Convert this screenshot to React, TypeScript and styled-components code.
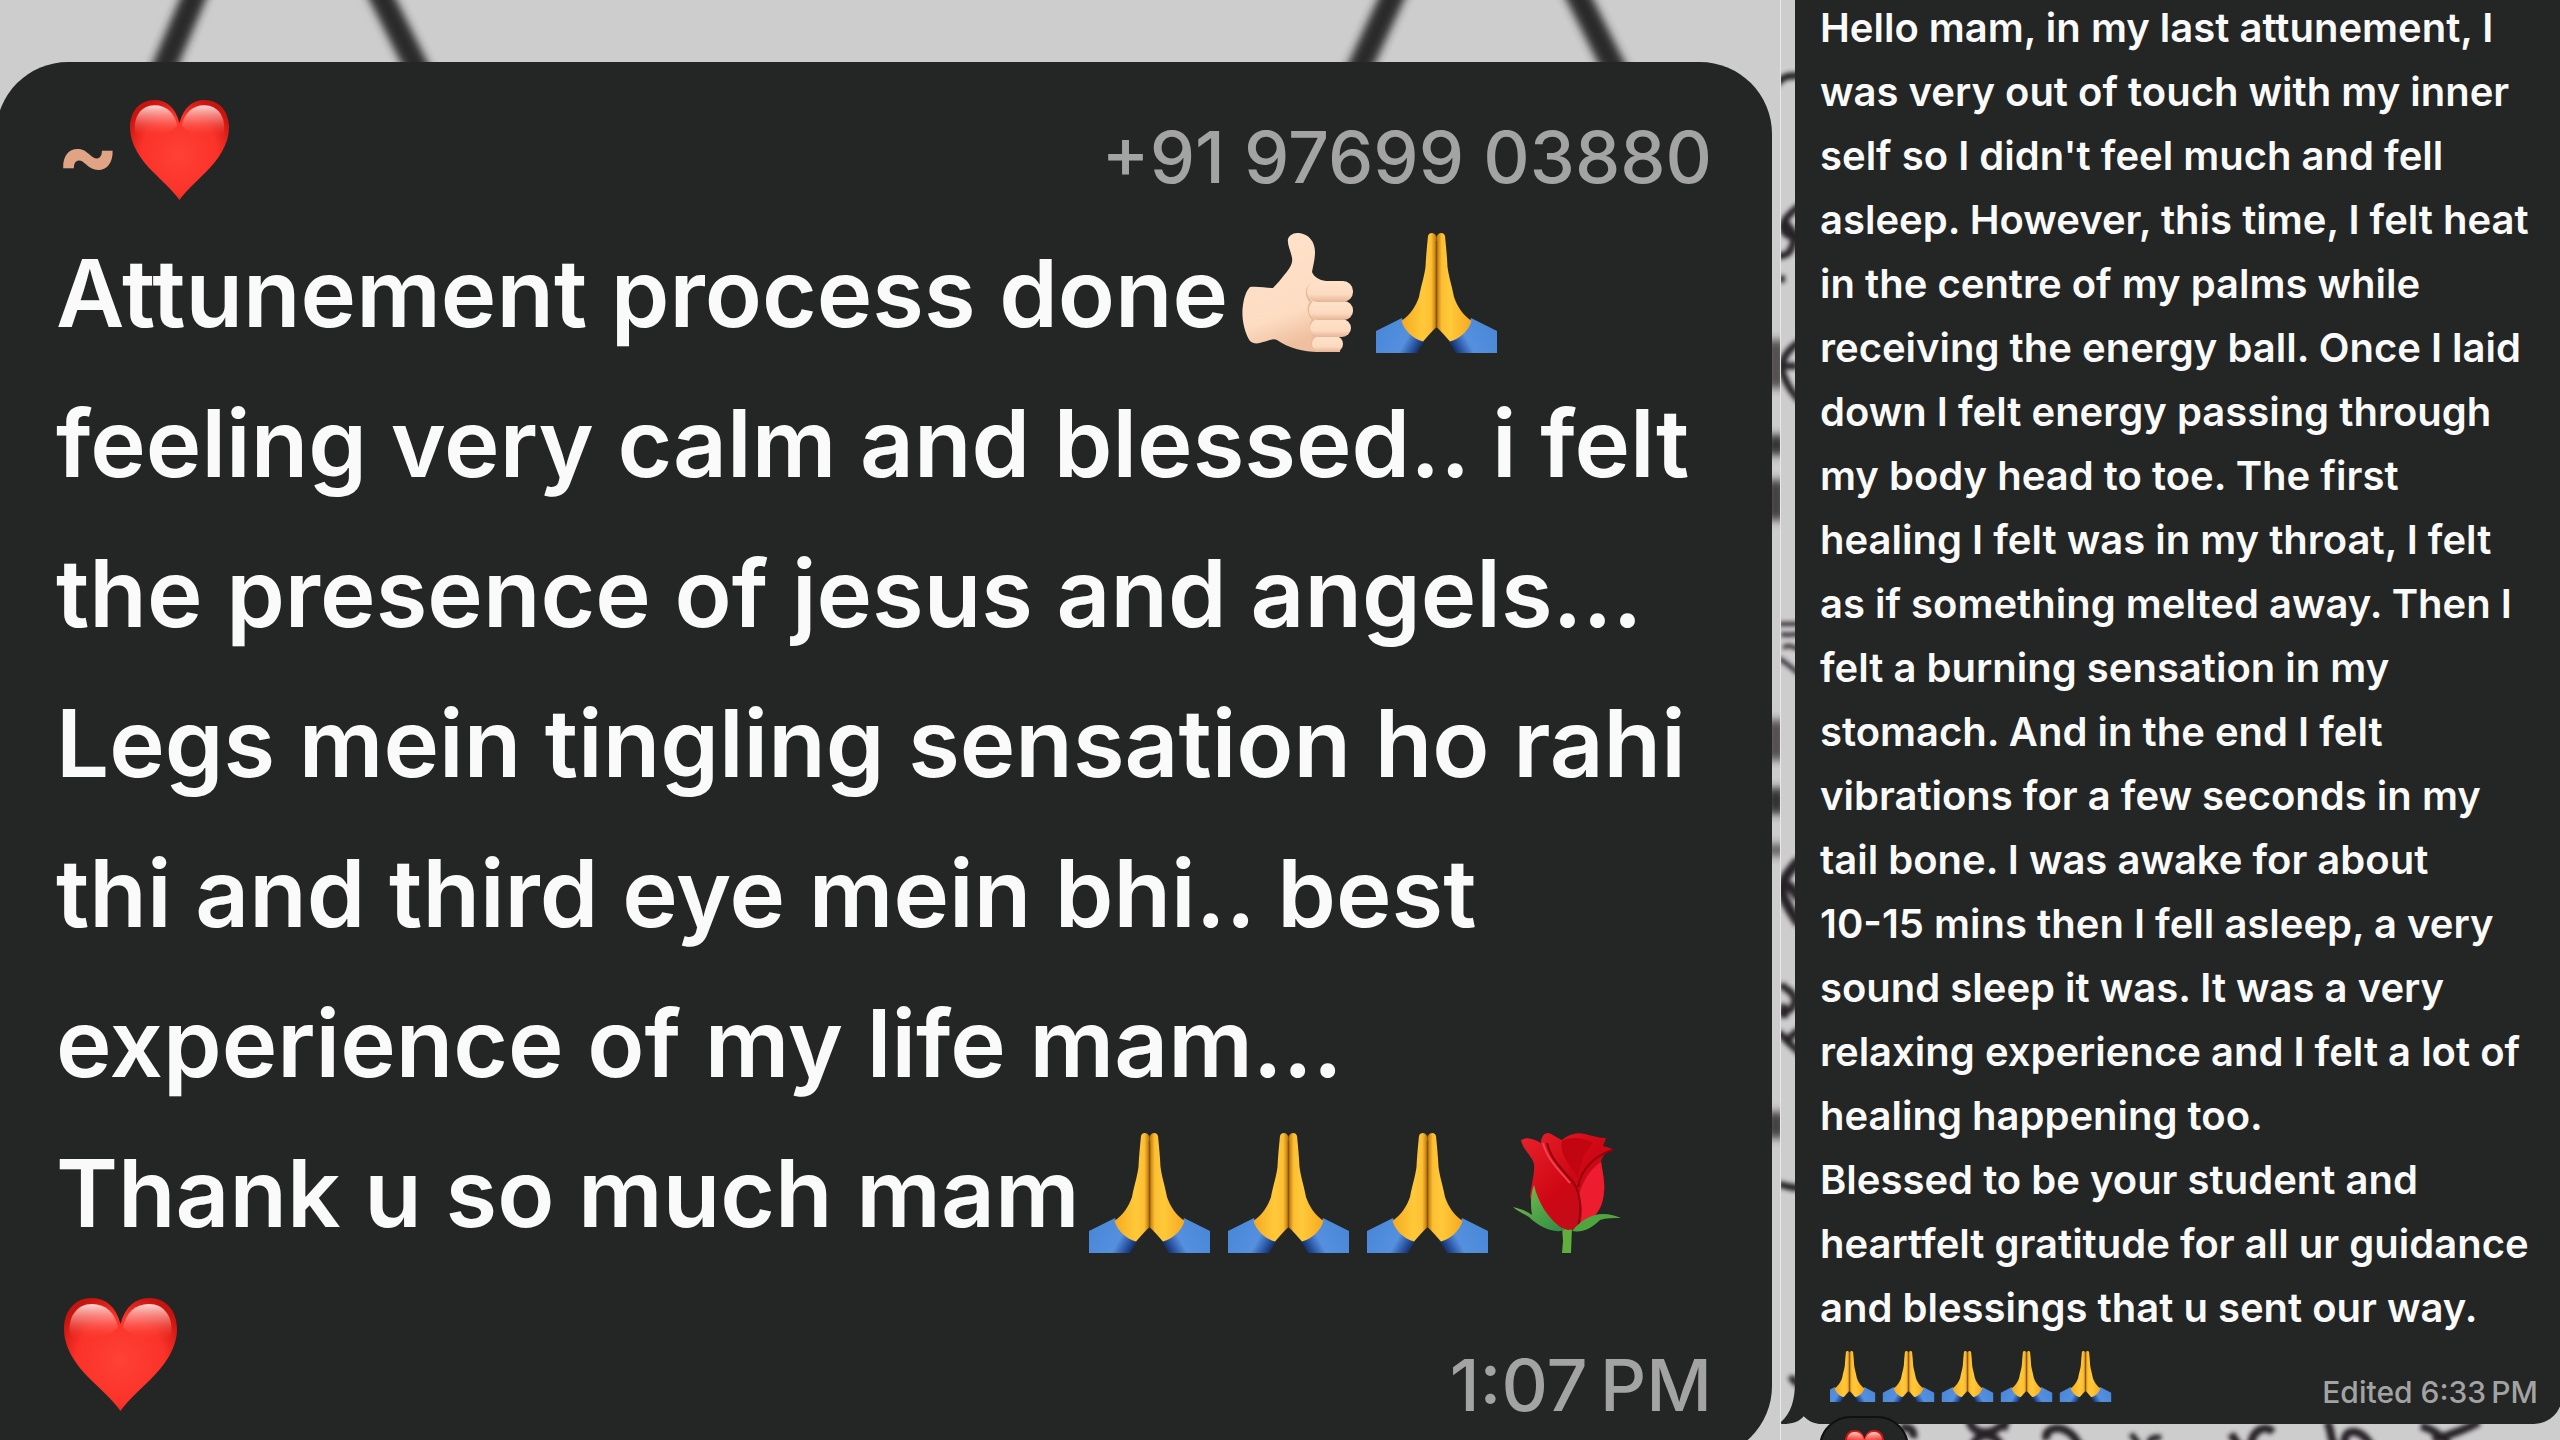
import React from 'react';
import styled, { createGlobalStyle } from 'styled-components';

const GlobalStyle = createGlobalStyle`
  *, *::before, *::after { box-sizing: border-box; }
  body {
    margin: 0;
    background: #cecdce;
    color: #fafafa;
    font-family: Inter, "Liberation Sans", sans-serif;
  }
`;

const Collage = styled.main`
  display: grid;
  grid-template-columns: 178fr 78fr;
  height: 100vh;
  overflow: hidden;
`;

const Panel = styled.section<{ $pad: string; $divided?: boolean }>`
  position: relative;
  display: flex;
  flex-direction: column;
  min-width: 0;
  padding: ${p => p.$pad};
  overflow: hidden;
  background: #cecdce;
  border-left: ${p => (p.$divided ? '1px solid #e8e8e8' : 'none')};
`;

const Wallpaper = styled.svg`
  position: absolute;
  inset: 0;
  width: 100%;
  height: 100%;
`;

const LargeBubble = styled.article`
  position: relative;
  margin-left: -4px;
  padding: 34px 60px 40px 60px;
  border-radius: 72px 72px 72px 0;
  background: #242625;
`;

const SmallBubble = styled.article`
  position: relative;
  margin: -4px -2px 0 0;
  padding: 0 24px 20px 25px;
  border-radius: 0 0 28px 28px;
  background: #242625;
`;

const Header = styled.header`
  display: flex;
  justify-content: space-between;
  height: 122px;
`;

const Sender = styled.span`
  color: #e0a484;
  font-size: 94px;
  font-weight: 700;
  line-height: 114px;
  white-space: nowrap;
`;

const Phone = styled.span`
  color: #a3a3a3;
  font-size: 72px;
  font-weight: 500;
  line-height: 122px;
  white-space: nowrap;
`;

const Message = styled.p<{ $size: number; $line: number }>`
  margin: 0;
  font-size: ${p => p.$size}px;
  font-weight: 600;
  line-height: ${p => p.$line}px;
`;

const Line = styled.span`
  display: block;
  white-space: nowrap;
`;

const LastRow = styled.div<{ $size: number; $line: number }>`
  display: flex;
  align-items: flex-end;
  justify-content: space-between;
  height: ${p => p.$line}px;
  font-size: ${p => p.$size}px;
  font-weight: 600;
  line-height: ${p => p.$line}px;
`;

const Hands = styled.span`
  display: flex;
  padding-bottom: 2px;
`;

const Time = styled.time<{ $size: number; $line: number }>`
  color: #a3a3a3;
  font-size: ${p => p.$size}px;
  font-weight: 500;
  line-height: ${p => p.$line}px;
  white-space: nowrap;
`;

const Glyph = styled.svg<{ $w: number; $h: number; $drop?: number; $gap?: number }>`
  flex: none;
  width: ${p => p.$w}px;
  height: ${p => p.$h}px;
  margin-left: ${p => p.$gap ?? 0}px;
  vertical-align: ${p => -(p.$drop ?? 0)}px;
`;

const Tail = styled.svg`
  position: absolute;
  left: -15px;
  bottom: 0;
  width: 50px;
  height: 50px;
`;

const Reaction = styled.button`
  position: absolute;
  top: calc(100% - 8px);
  left: 24px;
  display: flex;
  justify-content: center;
  width: 90px;
  height: 64px;
  padding: 12px 0 0;
  border: 2px solid #0f1010;
  border-radius: 32px;
  background: #242625;
`;

const Defs = styled.svg`
  position: absolute;
  width: 0;
  height: 0;
`;

type Size = { w: number; h: number; drop?: number; gap?: number };

const SharedGradients = () => (
  <Defs aria-hidden="true">
    <defs>
      <radialGradient id="heartFill" cx="0.5" cy="0.55" r="0.6">
        <stop offset="0" stopColor="#ff4135" />
        <stop offset="0.65" stopColor="#fb3229" />
        <stop offset="1" stopColor="#c8140f" />
      </radialGradient>
      <linearGradient id="heartGloss" x1="0" y1="0" x2="0" y2="1">
        <stop offset="0" stopColor="#ffe3e0" stopOpacity="0.95" />
        <stop offset="0.45" stopColor="#ff9a92" stopOpacity="0.6" />
        <stop offset="1" stopColor="#ff4135" stopOpacity="0" />
      </linearGradient>
      <linearGradient id="handFill" x1="0" y1="0" x2="1" y2="0">
        <stop offset="0" stopColor="#f6a91f" />
        <stop offset="0.6" stopColor="#ffc93a" />
        <stop offset="0.85" stopColor="#fdbf33" />
        <stop offset="1" stopColor="#b87308" />
      </linearGradient>
      <linearGradient id="sleeveFill" x1="0" y1="0.4" x2="1" y2="0.8">
        <stop offset="0" stopColor="#4a87d8" />
        <stop offset="0.6" stopColor="#5590df" />
        <stop offset="0.8" stopColor="#2b56a3" />
        <stop offset="1" stopColor="#0a1c48" />
      </linearGradient>
      <linearGradient id="skinFill" x1="0" y1="0" x2="0.3" y2="1">
        <stop offset="0" stopColor="#ffe3cb" />
        <stop offset="0.75" stopColor="#fddcc2" />
        <stop offset="1" stopColor="#efbf9f" />
      </linearGradient>
      <linearGradient id="fingerFill" x1="0" y1="0" x2="0" y2="1">
        <stop offset="0" stopColor="#ffe2ca" />
        <stop offset="0.65" stopColor="#fcdac0" />
        <stop offset="1" stopColor="#e5b594" />
      </linearGradient>
      <linearGradient id="roseFill" x1="0" y1="0" x2="1" y2="1">
        <stop offset="0" stopColor="#e8222c" />
        <stop offset="0.5" stopColor="#cf0714" />
        <stop offset="1" stopColor="#b8101f" />
      </linearGradient>
      <linearGradient id="leafFill" x1="0" y1="0" x2="1" y2="1">
        <stop offset="0" stopColor="#7cc04c" />
        <stop offset="1" stopColor="#2e8a45" />
      </linearGradient>
    </defs>
  </Defs>
);

const Heart = ({ w, h, drop, gap }: Size) => (
  <Glyph $w={w} $h={h} $drop={drop} $gap={gap} viewBox="0 0 113 113" preserveAspectRatio="none" role="img" aria-label="Red heart">
    <path fill="url(#heartFill)" d="M56.500 26C61 9 71 0 85 0C102 0 113 13 113 31C113 50 101 67 87 81C76 92 64 102 56.500 113C49 102 37 92 26 81C12 67 0 50 0 31C0 13 11 0 28 0C42 0 52 9 56.500 26Z" />
    <path fill="url(#heartGloss)" d="M28 6C42 6 51 15 54 29C42 42 20 44 6 38C3 19 13 6 28 6Z" />
    <path fill="url(#heartGloss)" d="M85 6C71 6 62 15 59 29C71 42 93 44 107 38C110 19 100 6 85 6Z" />
  </Glyph>
);

const HandHalf = () => (
  <>
    <path fill="url(#sleeveFill)" d="M9 98L35 85C38 96 45 105 58 107L50 120H9Z" />
    <path fill="url(#handFill)" d="M61 3C62 -1 68 -1 69.500 4V94C65 98 61 103 56 108.500C46 106 37 97 34.500 88C43 82 49 73 52 64C54 53 57 45 58.500 34C59 23 60 13 61 3Z" />
  </>
);

const Pray = ({ w, h, drop }: Size) => (
  <Glyph $w={w} $h={h} $drop={drop} viewBox="0 0 139 120" role="img" aria-label="Folded hands">
    <HandHalf />
    <g transform="matrix(-1 0 0 1 139 0)">
      <HandHalf />
    </g>
    <path stroke="#8a5206" strokeWidth="1.500" fill="none" d="M69.500 8V94" />
  </Glyph>
);

const ThumbsUp = ({ w, h, drop }: Size) => (
  <Glyph $w={w} $h={h} $drop={drop} viewBox="0 0 139 120" role="img" aria-label="Thumbs up, light skin tone">
    <path fill="url(#skinFill)" d="M60 6C62 1 66 0 71 0C81 1 87 9 87 19C87 27 85 33 84 39C86 44 91 47 98 48L110 90L112 119H90C76 119 60 115 49 107C45 105 40 108 35 109C30 111 25 111 22 108C16 99 13 83 15 72C16 65 18 58 22 54C29 53 38 55 45 55C49 51 53 46 57 41C62 35 65 30 64 25C63 18 59 12 60 6Z" />
    <path fill="none" stroke="#e8b999" strokeWidth="2" d="M86 50C77 53 77 63 83 69C79 74 80 81 85 87C81 92 82 99 87 104C83 108 83 114 88 118" />
    <rect x="84" y="103" width="31" height="16" rx="8" fill="url(#fingerFill)" />
    <rect x="82" y="86" width="41" height="18" rx="9" fill="url(#fingerFill)" />
    <rect x="81" y="68" width="44" height="19" rx="9" fill="url(#fingerFill)" />
    <rect x="79" y="48" width="46" height="21" rx="10" fill="url(#fingerFill)" />
  </Glyph>
);

const Rose = ({ w, h, drop }: Size) => (
  <Glyph $w={w} $h={h} $drop={drop} viewBox="0 0 139 120" role="img" aria-label="Rose">
    <path fill="#5fae3e" d="M65 94H75L74 120H65L66 108Z" />
    <path fill="url(#roseFill)" d="M24 7C31 3 38 7 44 10C44 4 47 0 51 0C56 1 60 5 65 7C72 1 80 -1 88 1C96 3 102 5 109 5L106 13C110 14 114 15 116 17C108 20 105 23 104 29C106 42 109 52 106 66C103 82 88 95 71 97C53 92 38 78 33 64C34 52 38 41 37 31C35 23 26 17 24 7Z" />
    <path fill="#ed1c2e" d="M104 29C92 37 85 50 82 62C86 74 86 86 81 94C96 88 104 77 106 66C109 52 106 42 104 29Z" />
    <path fill="#c20511" d="M65 8C75 3 87 5 96 10C89 18 83 27 81 45C74 33 62 22 65 8Z" />
    <path fill="none" stroke="#8e000c" strokeWidth="2" d="M50 10C54 27 66 37 76 49C84 60 85 78 81 94M116 17C98 22 84 36 81 54" />
    <path fill="none" stroke="#f4404c" strokeWidth="2" d="M46 10C50 26 62 37 73 50" />
    <path fill="url(#leafFill)" d="M16 74C24 76 30 78 35 82C33 70 34 60 37 52C41 69 51 87 68 97C57 101 42 94 32 84C26 80 20 78 16 74Z" />
    <path fill="#4fa540" d="M75 98C83 88 94 81 106 81C113 81 119 83 124 85C116 85 109 85 103 87C96 94 87 100 75 98Z" />
  </Glyph>
);

const LEFT_LINES = [
  'feeling very calm and blessed.. i felt',
  'the presence of jesus and angels...',
  'Legs mein tingling sensation ho rahi',
  'thi and third eye mein bhi.. best',
  'experience of my life mam...',
];

const RIGHT_LINES = [
  'Hello mam, in my last attunement, I',
  'was very out of touch with my inner',
  "self so I didn't feel much and fell",
  'asleep. However, this time, I felt heat',
  'in the centre of my palms while',
  'receiving the energy ball. Once I laid',
  'down I felt energy passing through',
  'my body head to toe. The first',
  'healing I felt was in my throat, I felt',
  'as if something melted away. Then I',
  'felt a burning sensation in my',
  'stomach. And in the end I felt',
  'vibrations for a few seconds in my',
  'tail bone. I was awake for about',
  '10-15 mins then I fell asleep, a very',
  'sound sleep it was. It was a very',
  'relaxing experience and I felt a lot of',
  'healing happening too.',
  'Blessed to be your student and',
  'heartfelt gratitude for all ur guidance',
  'and blessings that u sent our way.',
];

const big = { w: 139, h: 120, drop: 26 };

const LeftWallpaper = () => (
  <Wallpaper viewBox="0 0 1780 1440" preserveAspectRatio="xMaxYMin slice" aria-hidden="true">
    <defs>
      <filter id="softWide" x="-20%" y="-20%" width="140%" height="140%">
        <feGaussianBlur stdDeviation="4" />
      </filter>
    </defs>
    <g filter="url(#softWide)" stroke="#2c2b2c" strokeWidth="24" fill="none">
      <path d="M201 -20L158 82" />
      <path d="M373 -20L424 82" />
      <path d="M1400 -20L1353 82" />
      <path d="M1570 -20L1621 82" />
    </g>
    <g filter="url(#softWide)" fill="#333031">
      <rect x="1766" y="340" width="20" height="48" opacity="0.800" />
      <rect x="1766" y="435" width="20" height="20" />
      <rect x="1766" y="480" width="20" height="40" opacity="0.900" />
      <rect x="1766" y="720" width="20" height="40" opacity="0.800" />
      <rect x="1766" y="788" width="20" height="26" />
      <rect x="1766" y="844" width="20" height="12" opacity="0.700" />
      <rect x="1766" y="1112" width="20" height="26" opacity="0.900" />
    </g>
  </Wallpaper>
);

const RightWallpaper = () => (
  <Wallpaper viewBox="0 0 779 1440" preserveAspectRatio="xMinYMin slice" aria-hidden="true">
    <defs>
      <filter id="softFine" x="-20%" y="-20%" width="140%" height="140%">
        <feGaussianBlur stdDeviation="2" />
      </filter>
    </defs>
    <g filter="url(#softFine)" stroke="#262425" strokeWidth="7" fill="none">
      <path d="M-4 84C2 76 8 75 20 76" />
      <path d="M18 206C6 216 -2 224 3 232C9 240 14 232 12 244C9 254 5 256 -4 256M4 222C10 228 14 236 20 240" />
      <path d="M-2 279H4" />
      <path d="M18 342C4 352 -2 362 2 374C6 386 12 394 20 402M0 366H16" />
      <path d="M-2 624H18M0 634C6 636 12 634 18 634M2 648C10 642 12 650 18 648M-2 658C6 664 12 668 18 674" strokeWidth="4" />
      <path d="M18 860C8 872 0 880 1 892C4 904 12 914 18 924M0 886C8 882 12 890 18 898" strokeWidth="10" />
      <path d="M0 984C4 990 12 990 14 1000C12 1012 4 1012 -2 1014M2 1004L4 1018M-2 1032C6 1042 12 1046 20 1054M18 1030L6 1040" />
      <path d="M-2 1184C4 1186 10 1188 20 1188" />
      <path d="M10 1376C12 1381 14 1383 18 1384" />
    </g>
    <g filter="url(#softFine)" stroke="#262425" strokeWidth="8" fill="none">
      <path d="M120 1428C128 1426 134 1430 132 1438" />
      <path d="M188 1418C190 1436 210 1436 222 1424M192 1446C196 1432 214 1432 220 1446M222 1430L226 1418" />
      <path d="M266 1440C262 1430 274 1426 284 1430C292 1434 294 1438 300 1448" />
      <path d="M350 1434L358 1444M370 1446C366 1440 372 1436 380 1438" strokeWidth="6" />
      <path d="M450 1434L458 1446M470 1444C472 1430 484 1424 492 1432" />
      <path d="M546 1422C552 1432 548 1440 556 1450M564 1446C560 1428 580 1426 590 1446" />
      <path d="M640 1426C654 1430 660 1436 668 1446M652 1440C672 1434 684 1430 698 1422" />
    </g>
  </Wallpaper>
);

export default function App() {
  return (
    <>
      <GlobalStyle />
      <SharedGradients />
      <Collage>
        <Panel $pad="62px 8px 0 0">
          <LeftWallpaper />
          <LargeBubble>
            <Header>
              <Sender>
                ~<Heart w={99} h={100} drop={13} gap={10} />
              </Sender>
              <Phone>+91 97699 03880</Phone>
            </Header>
            <Message $size={94} $line={150}>
              <Line>
                Attunement process done
                <ThumbsUp {...big} />
                <Pray {...big} />
              </Line>
              {LEFT_LINES.map(text => (
                <Line key={text}>{text}</Line>
              ))}
              <Line>
                Thank u so much mam
                <Pray {...big} />
                <Pray {...big} />
                <Pray {...big} />
                <Rose {...big} />
              </Line>
            </Message>
            <LastRow $size={94} $line={150}>
              <Line>
                <Heart w={113} h={113} drop={34} gap={8} />
              </Line>
              <Time $size={72} $line={66}>1:07{'\u202f'}PM</Time>
            </LastRow>
          </LargeBubble>
        </Panel>
        <Panel $pad="0 0 0 14px" $divided>
          <RightWallpaper />
          <SmallBubble>
            <Message $size={40} $line={64}>
              {RIGHT_LINES.map(text => (
                <Line key={text}>{text}</Line>
              ))}
            </Message>
            <LastRow $size={40} $line={64}>
              <Hands>
                {[0, 1, 2, 3, 4].map(i => (
                  <Pray key={i} w={59} h={51} />
                ))}
              </Hands>
              <Time $size={30} $line={24}>Edited 6:33{'\u202f'}PM</Time>
            </LastRow>
            <Tail viewBox="0 0 50 50" aria-hidden="true">
              <path fill="#242625" d="M15 0V8C15 26 11 39 1 48C0 49 1 50 3 50C12 50 19 48 24 42C29 48 35 50 42 50H50V0Z" />
            </Tail>
            <Reaction type="button" aria-label="Heart reaction">
              <Heart w={39} h={39} />
            </Reaction>
          </SmallBubble>
        </Panel>
      </Collage>
    </>
  );
}
